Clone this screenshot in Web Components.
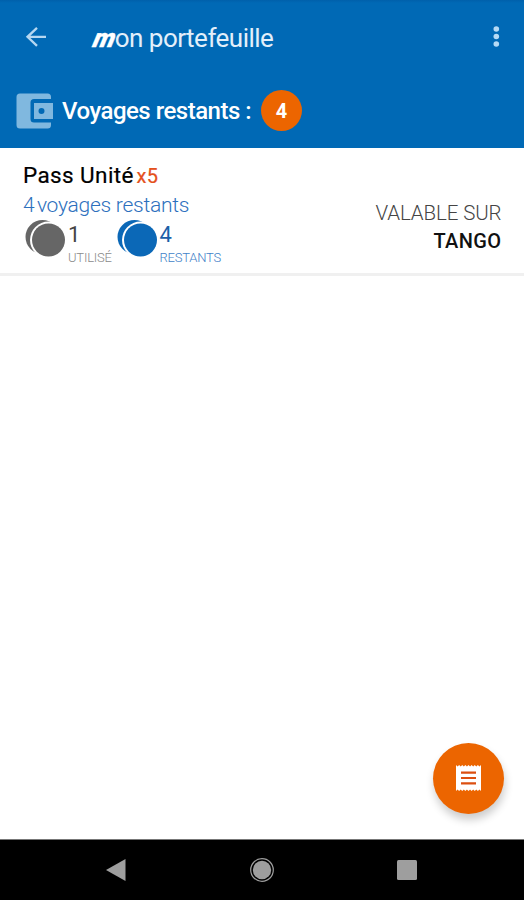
<!DOCTYPE html>
<html lang="fr">
<head>
<meta charset="utf-8">
<title>mon portefeuille</title>
<style>
    body {
        margin: 0;
        background: #fff;
        font-family: Roboto, sans-serif;
    }
</style>
</head>
<body>
<wallet-app></wallet-app>

<script>
class AppBar extends HTMLElement {
    connectedCallback() {
        this.attachShadow({ mode: 'open' });
        this.shadowRoot.innerHTML = `
            <style>
                :host {
                    display: flex;
                    align-items: center;
                    height: 74px;
                    box-sizing: border-box;
                    padding: 0 20px 0 24px;
                    background: linear-gradient(#0060ab, #0069b5 3px);
                    color: #e3effa;
                }
                svg { display: block; flex: none; }
                h1 {
                    flex: 1;
                    margin: 2px 0 0 45px;
                    font-size: 26px;
                    line-height: 30px;
                    font-weight: 400;
                    letter-spacing: -0.52px;
                    white-space: nowrap;
                }
                b {
                    display: inline-block;
                    font-weight: 900;
                    font-style: italic;
                    color: #fff;
                    letter-spacing: 0;
                    transform: translateX(1px) skewX(-14deg);
                    -webkit-text-stroke: 0.3px #fff;
                }
            </style>
            <svg width="24" height="24" viewBox="0 0 24 24" fill="none" stroke="#b5d7f1" stroke-width="2.3">
                <path d="M22 11.800H3.500M13 2.800L3.500 11.800L13 20.800"/>
            </svg>
            <h1><b>m</b>on portefeuille</h1>
            <svg width="16" height="24" viewBox="0 0 16 24" fill="#b5daf5">
                <circle cx="8.3" cy="4" r="2.8"/>
                <circle cx="8.3" cy="11.5" r="2.8"/>
                <circle cx="8.3" cy="19" r="2.8"/>
            </svg>
        `;
    }
}

class TripSummary extends HTMLElement {
    connectedCallback() {
        this.attachShadow({ mode: 'open' });
        this.shadowRoot.innerHTML = `
            <style>
                :host {
                    display: flex;
                    align-items: center;
                    height: 74px;
                    box-sizing: border-box;
                    padding: 0 16px 1px;
                    background: #0069b5;
                    color: #fff;
                }
                svg { display: block; flex: none; }
                .label {
                    margin: 1px 0 0 8px;
                    font-size: 24px;
                    line-height: 28px;
                    font-weight: 500;
                    letter-spacing: -0.5px;
                    white-space: nowrap;
                }
                .count {
                    width: 41px;
                    height: 41px;
                    margin-left: 10px;
                    border-radius: 50%;
                    background: #ec6500;
                    font-size: 20px;
                    line-height: 42px;
                    font-weight: 700;
                    text-align: center;
                }
            </style>
            <svg width="38" height="36" viewBox="0 0 38 36">
                <path fill="#80b8df" d="M4 .5H31.500Q35 .5 35 4V6H18Q14.500 6 14.500 9.500V26Q14.500 29.500 18 29.500H35V32Q35 35.500 31.500 35.500H4Q.5 35.500 .5 32V4Q.5 .5 4 .5Z"/>
                <path fill="#80b8df" fill-rule="evenodd" d="M18 10H37V26H18ZM25.500 15A3 3 0 1 0 25.500 21A3 3 0 1 0 25.500 15Z"/>
            </svg>
            <span class="label"><slot></slot></span>
            <span class="count">${this.getAttribute('count')}</span>
        `;
    }
}

class TokenCount extends HTMLElement {
    connectedCallback() {
        this.attachShadow({ mode: 'open' });
        this.shadowRoot.innerHTML = `
            <style>
                :host { display: flex; height: 42px; }
                svg { display: block; flex: none; fill: var(--token); }
                .text { display: flex; flex-direction: column; margin-left: 3px; }
                .value {
                    font-size: 22px;
                    line-height: 29px;
                    color: var(--value);
                }
                .label {
                    margin-top: 1px;
                    font-size: 13px;
                    line-height: 15px;
                    font-weight: 300;
                    color: var(--label);
                    letter-spacing: -0.2px;
                }
            </style>
            <svg width="42" height="40" viewBox="0 0 42 40">
                <circle cx="19.500" cy="17" r="17"/>
                <circle cx="25.500" cy="20" r="18.500" fill="#fff"/>
                <circle cx="25.500" cy="20" r="16.500"/>
            </svg>
            <div class="text">
                <span class="value">${this.getAttribute('value')}</span>
                <span class="label"><slot></slot></span>
            </div>
        `;
    }
}

class PassCard extends HTMLElement {
    connectedCallback() {
        this.attachShadow({ mode: 'open' });
        this.shadowRoot.innerHTML = `
            <style>
                :host {
                    display: flex;
                    justify-content: space-between;
                    height: 128px;
                    box-sizing: border-box;
                    padding: 13px 22.5px 0 23px;
                    border-bottom: 3px solid #f0f0f0;
                    background: #fff;
                    white-space: nowrap;
                }
                .name {
                    display: flex;
                    align-items: baseline;
                    font-size: 22.5px;
                    line-height: 28px;
                    font-weight: 400;
                    letter-spacing: 0.4px;
                    color: #000;
                    -webkit-text-stroke: 0.2px;
                }
                .qty { margin-left: 2.5px; font-size: 20px; color: #e4501c; }
                .left {
                    font-size: 21px;
                    line-height: 28px;
                    margin-top: 1px;
                    font-weight: 300;
                    letter-spacing: -0.25px;
                    color: #2d70bd;
                }
                .left .n { margin-right: 2.5px; }
                .tokens { display: flex; margin-top: 1px; }
                .used { --token: #666; --value: #444; --label: #8a8a8a; width: 92px; }
                .rest { --token: #0b68b7; --value: #1c5fa8; --label: #3f7fc8; margin-left: -0.5px; }
                .valid {
                    display: flex;
                    flex-direction: column;
                    align-items: flex-end;
                    padding-top: 38px;
                    font-size: 20.5px;
                    line-height: 28px;
                    font-weight: 300;
                    letter-spacing: -0.1px;
                    color: #444;
                }
                .network { font-weight: 500; color: #111; font-size: 20px; letter-spacing: 0.4px; }
            </style>
            <div>
                <div class="name"><span><slot name="name"></slot></span><span class="qty"><slot name="qty"></slot></span></div>
                <div class="left"><span class="n">4</span><span>voyages restants</span></div>
                <div class="tokens">
                    <token-count class="used" value="1">UTILISÉ</token-count>
                    <token-count class="rest" value="4">RESTANTS</token-count>
                </div>
            </div>
            <div class="valid">
                <span>VALABLE SUR</span>
                <span class="network"><slot name="network"></slot></span>
            </div>
        `;
    }
}

class ReceiptButton extends HTMLElement {
    connectedCallback() {
        this.attachShadow({ mode: 'open' });
        this.shadowRoot.innerHTML = `
            <style>
                :host {
                    display: flex;
                    align-items: center;
                    justify-content: center;
                    width: 71px;
                    height: 71px;
                    border-radius: 50%;
                    background: #ec6500;
                    box-shadow: 1px 6px 9px rgba(0, 0, 0, 0.2);
                }
                svg { display: block; }
            </style>
            <svg width="25" height="26" viewBox="0 0 25 26">
                <path fill="#fff" d="M0 0L1.560 1.600L3.120 0L4.690 1.600L6.250 0L7.810 1.600L9.370 0L10.940 1.600L12.500 0L14.060 1.600L15.620 0L17.190 1.600L18.750 0L20.310 1.600L21.870 0L23.440 1.600L25 0V26L23.440 24.400L21.870 26L20.310 24.400L18.750 26L17.190 24.400L15.620 26L14.060 24.400L12.500 26L10.940 24.400L9.370 26L7.810 24.400L6.250 26L4.690 24.400L3.120 26L1.560 24.400L0 26Z"/>
                <path stroke="#dc4f10" stroke-width="2.200" d="M5 7.700H20M5 13H20M5 18.300H20"/>
            </svg>
        `;
    }
}

class NavBar extends HTMLElement {
    connectedCallback() {
        this.attachShadow({ mode: 'open' });
        this.shadowRoot.innerHTML = `
            <style>
                :host {
                    display: flex;
                    align-items: center;
                    justify-content: space-between;
                    height: 61px;
                    box-sizing: border-box;
                    padding: 0 106px 0 105px;
                    border-top: 1px solid #777;
                    background: #000;
                }
                svg { display: block; }
            </style>
            <svg width="22" height="24" viewBox="0 0 22 24"><path fill="#9e9e9e" d="M1 12L20.500 1V23Z"/></svg>
            <svg width="26" height="26" viewBox="0 0 26 26">
                <circle cx="13" cy="13" r="11.300" fill="none" stroke="#9e9e9e" stroke-width="1.200"/>
                <circle cx="13" cy="13" r="9.200" fill="#9e9e9e"/>
            </svg>
            <svg width="22" height="22" viewBox="0 0 22 22"><rect x="1" y="1" width="20" height="20" rx="1.500" fill="#9e9e9e"/></svg>
        `;
    }
}

class WalletApp extends HTMLElement {
    connectedCallback() {
        this.attachShadow({ mode: 'open' });
        this.shadowRoot.innerHTML = `
            <style>
                :host {
                    display: flex;
                    flex-direction: column;
                    height: 900px;
                    overflow: hidden;
                }
                main {
                    flex: 1;
                    display: flex;
                    flex-direction: column;
                    justify-content: flex-end;
                    align-items: flex-end;
                    padding: 0 20.5px 25.5px 0;
                }
            </style>
            <app-bar></app-bar>
            <trip-summary count="4">Voyages restants :</trip-summary>
            <pass-card>
                <span slot="name">Pass Unité</span>
                <span slot="qty">x5</span>
                <span slot="network">TANGO</span>
            </pass-card>
            <main><receipt-button></receipt-button></main>
            <nav-bar></nav-bar>
        `;
    }
}

customElements.define('app-bar', AppBar);
customElements.define('trip-summary', TripSummary);
customElements.define('token-count', TokenCount);
customElements.define('pass-card', PassCard);
customElements.define('receipt-button', ReceiptButton);
customElements.define('nav-bar', NavBar);
customElements.define('wallet-app', WalletApp);
</script>
</body>
</html>
